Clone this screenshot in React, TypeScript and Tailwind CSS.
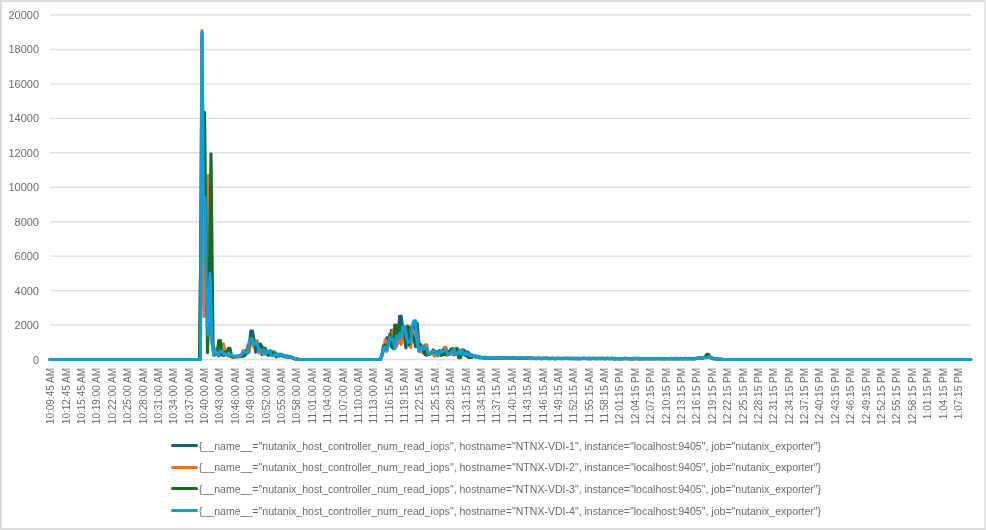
const BASE_Y = 359.5;
const SCALE = 344.5 / 20000;

const times = [
  "10:09:45 AM","10:12:45 AM","10:15:45 AM","10:19:00 AM","10:22:00 AM","10:25:00 AM","10:28:00 AM","10:31:00 AM","10:34:00 AM","10:37:00 AM",
  "10:40:00 AM","10:43:00 AM","10:46:00 AM","10:49:00 AM","10:52:00 AM","10:55:00 AM","10:58:00 AM","11:01:00 AM","11:04:00 AM","11:07:00 AM",
  "11:10:00 AM","11:13:00 AM","11:16:15 AM","11:19:15 AM","11:22:15 AM","11:25:15 AM","11:28:15 AM","11:31:15 AM","11:34:15 AM","11:37:15 AM",
  "11:40:15 AM","11:43:15 AM","11:46:15 AM","11:49:15 AM","11:52:15 AM","11:55:15 AM","11:58:15 AM","12:01:15 PM","12:04:15 PM","12:07:15 PM",
  "12:10:15 PM","12:13:15 PM","12:16:15 PM","12:19:15 PM","12:22:15 PM","12:25:15 PM","12:28:15 PM","12:31:15 PM","12:34:15 PM","12:37:15 PM",
  "12:40:15 PM","12:43:15 PM","12:46:15 PM","12:49:15 PM","12:52:15 PM","12:55:15 PM","12:58:15 PM","1:01:15 PM","1:04:15 PM","1:07:15 PM",
];

type P = [number, number];

function rng(seed: number) {
  let s = seed;
  return () => {
    s = (s * 16807) % 2147483647;
    return s / 2147483647;
  };
}

const tail: P[] = [
  [214, 500], [220, 350], [226, 300], [232, 200], [238, 150], [244, 300], [248, 600], [252, 950], [256, 800], [262, 550],
  [270, 350], [280, 250], [290, 130], [296, 30], [300, 0], [381, 0], [384, 700], [388, 1000], [394, 1150], [400, 1300],
  [408, 1350], [415, 1400], [419, 650], [426, 500], [436, 350], [446, 400], [456, 450], [466, 350], [474, 200], [482, 110],
  [500, 80], [560, 60], [640, 50], [695, 50], [702, 90], [708, 150], [714, 60], [720, 5], [726, 0], [971, 0],
];

function lerp(pts: P[], x: number) {
  for (let i = 1; i < pts.length; i++) {
    if (x <= pts[i][0]) {
      const [x0, y0] = pts[i - 1];
      const [x1, y1] = pts[i];
      return y0 + ((y1 - y0) * (x - x0)) / (x1 - x0);
    }
  }
  return 0;
}

function series(seed: number, spike: P[], extras: P[]) {
  const r = rng(seed);
  const out: P[] = [[50, 0], ...spike];
  for (let x = 214; x <= 971; x += 1.6) {
    const b = lerp(tail, x);
    const amp = b > 280 ? 0.5 : 0.3;
    let v = b * (1 + (r() - 0.5) * 2 * amp);
    for (const [ex, ev] of extras) {
      if (Math.abs(x - ex) < 1.7) v = ev;
    }
    out.push([x, Math.max(0, v)]);
  }
  return out.map(([x, v]) => `${x.toFixed(1)},${(BASE_Y - v * SCALE).toFixed(1)}`).join(" ");
}

const lines = [
  {
    color: "#156082",
    pts: series(11, [[200, 0], [202, 18900], [204, 3000], [206, 6000], [208, 1500], [210, 8000], [212, 1200]], [[252, 1650], [401, 2500], [393, 1700], [408, 1900], [416, 2100]]),
  },
  {
    color: "#E97132",
    pts: series(29, [[200, 0], [202, 19100], [204, 2500], [207, 5000], [208.5, 10700], [210, 2000], [212, 1000]], [[222, 900], [243, 500], [405, 1500], [394, 1700], [445, 700], [456, 650], [426, 850]]),
  },
  {
    color: "#196B24",
    pts: series(47, [[199.5, 0], [202, 12000], [204.5, 14350], [206, 7000], [207.5, 400], [209, 3000], [211, 11950], [213, 800]], [[220, 1100], [229, 650], [252, 1300], [396, 2000], [404, 1900], [412, 1400], [470, 120], [707, 300], [460, 100]]),
  },
  {
    color: "#0F9ED5",
    pts: series(73, [[200.5, 0], [202, 19000], [203.5, 9000], [205, 9400], [206.5, 3500], [208, 1400], [210, 5000], [212, 1000]], [[403, 1900], [415, 2250], [409, 1000], [421, 700]]),
  },
];

const legendName = (n: number) =>
  `{__name__="nutanix_host_controller_num_read_iops", hostname="NTNX-VDI-${n}", instance="localhost:9405", job="nutanix_exporter"}`;

export default function App() {
  return (
    <div className="w-[986px] h-[530px] bg-white overflow-hidden font-['Liberation_Sans',Arial,sans-serif] text-[#6b6b6b]">
      <div className="w-full h-full border-2 border-[#dcdcdc] border-r-[#e6e6e6] flex flex-col blur-[0.4px]">
        <svg width="982" height="437" viewBox="2 2 982 437" className="block shrink-0" fill="none">
          {Array.from({ length: 11 }, (_, i) => {
            const y = BASE_Y - (i * 2000 * 344.5) / 20000;
            return (
              <g key={i}>
                <line x1={50} x2={971} y1={y} y2={y} stroke="#dedede" strokeWidth={1.4} />
                <text x={39} y={y + 4} textAnchor="end" fontSize={11} fill="#6b6b6b">
                  {i * 2000}
                </text>
              </g>
            );
          })}
          {times.map((t, i) => {
            const x = 54.2 + i * 15.385;
            return (
              <text key={t} transform={`translate(${x} 368) rotate(-90)`} textAnchor="end" fontSize={10} fill="#6b6b6b">
                {t}
              </text>
            );
          })}
          {lines.map((l) => (
            <polyline key={l.color} points={l.pts} stroke={l.color} strokeWidth={3.1} strokeLinejoin="round" strokeLinecap="round" />
          ))}
        </svg>
        <div className="flex flex-col gap-[9.7px] pl-[169px] pt-[0.5px]">
          {lines.map((l, i) => (
            <div key={l.color} className="flex items-center gap-[1px] h-[12px]">
              <div className="w-[27px] h-[3px] rounded-full shrink-0" style={{ backgroundColor: l.color }} />
              <span className="text-[10.55px] leading-[12px] whitespace-nowrap">{legendName(i + 1)}</span>
            </div>
          ))}
        </div>
      </div>
    </div>
  );
}
